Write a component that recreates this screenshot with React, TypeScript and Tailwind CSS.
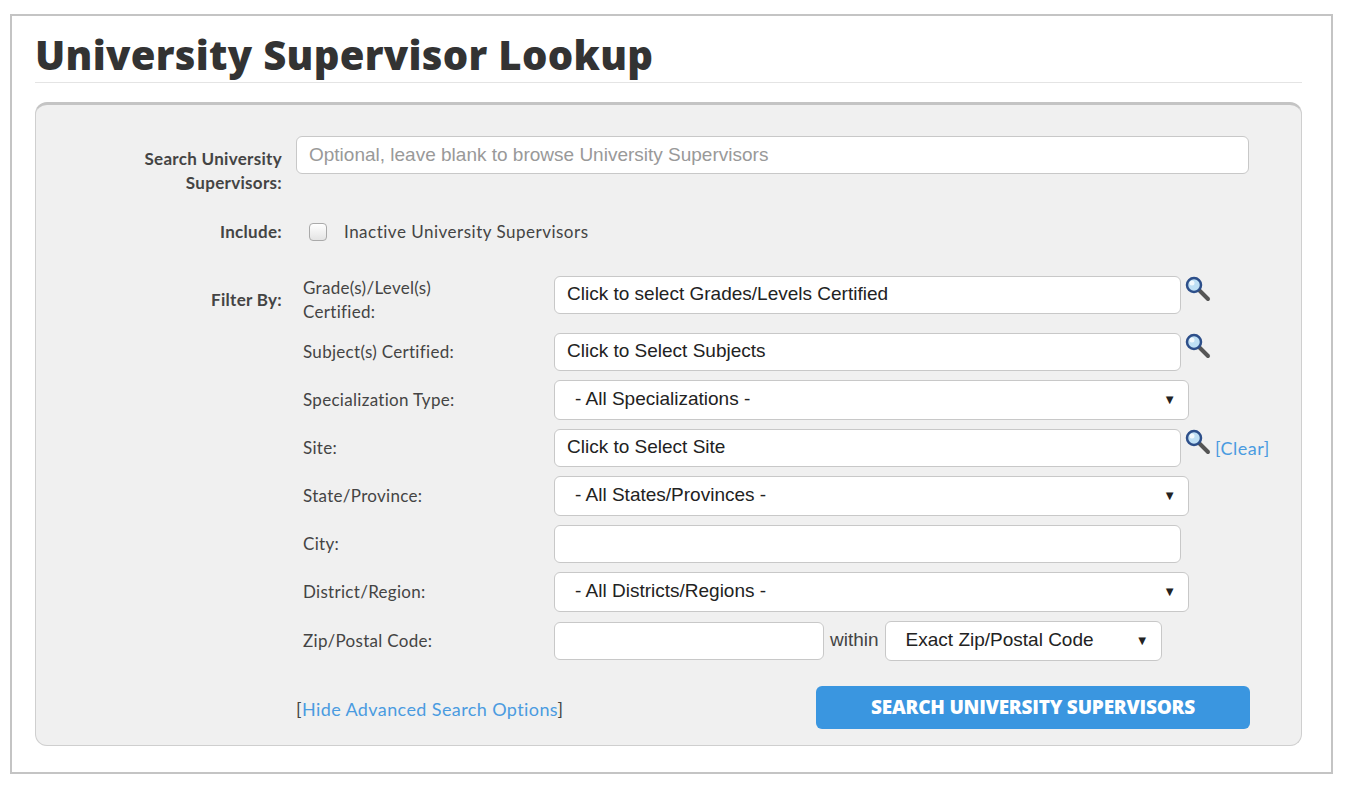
import React from 'react';

const Mag = () => (
  <svg width="26" height="26" viewBox="0 0 26 26" className="shrink-0">
    <line x1="14" y1="14" x2="23" y2="23" stroke="#555" strokeWidth="4" strokeLinecap="round" />
    <circle cx="9" cy="9" r="7" fill="#bfe0f5" stroke="#2d4f8a" strokeWidth="2.5" />
    <circle cx="7" cy="7" r="2.5" fill="#fff" opacity="0.8" />
  </svg>
);

const arial = "font-[family-name:Liberation_Sans,Arial,sans-serif]";
const field = `bg-white border border-[#c8c8c8] rounded-md h-[38px] flex items-center px-3 text-[19px] text-[#222] ${arial}`;

const Select = ({ text, w = 'w-[635px]' }: { text: string; w?: string }) => (
  <div className={`${field} ${w} h-[40px] justify-between pl-5 pr-3`}>
    <span>{text}</span>
    <span className="text-[13px]">▼</span>
  </div>
);

const Row = ({ label, top = false, children }: { label: React.ReactNode; top?: boolean; children: React.ReactNode }) => (
  <div className={`flex ${top ? 'items-start' : 'items-center'}`}>
    <div className="w-[251px] shrink-0 text-[17px] leading-[24px] text-[#444] tracking-[0.3px]">{label}</div>
    {children}
  </div>
);

export default function App() {
  return (
    <div className="min-h-[788px] bg-white pt-[14px] pl-[10px] font-[family-name:Lato,sans-serif]">
      <div className="w-[1323px] h-[760px] border-2 border-[#c4c4c4] pl-[23px] pr-[29px]">
        <h1 className="pt-[14px] pb-[2px] text-[40px] leading-[50px] font-extrabold text-[#333] tracking-[0.3px] font-[family-name:Open_Sans,sans-serif] border-b border-[#e4e4e4]">
          University Supervisor Lookup
        </h1>
        <div className="mt-[19px] h-[644px] bg-[#f0f0f0] border border-[#cfcfcf] border-t-[3px] border-t-[#c4c4c4] rounded-xl">
          <div className="flex pt-[31px]">
            <div className="w-[246px] shrink-0 text-right text-[17px] font-bold text-[#444] leading-[24px] pt-[11px] tracking-[0.3px]">
              Search University<br />Supervisors:
            </div>
            <div className={`ml-[14px] w-[953px] h-[38px] bg-white border border-[#c8c8c8] rounded-md flex items-center px-3 text-[19px] text-[#999] ${arial}`}>
              Optional, leave blank to browse University Supervisors
            </div>
          </div>
          <div className="flex items-center mt-[24px]">
            <div className="w-[246px] shrink-0 text-right text-[17px] font-bold text-[#444] tracking-[0.3px]">Include:</div>
            <div className="ml-[27px] w-[18px] h-[18px] rounded-[4px] border border-[#aaa] bg-gradient-to-b from-white to-[#e4e4e4]" />
            <span className="ml-[17px] text-[17px] text-[#444] tracking-[0.5px]">Inactive University Supervisors</span>
          </div>
          <div className="flex mt-[28px]">
            <div className="w-[246px] shrink-0 text-right text-[17px] font-bold text-[#444] pt-[14px] tracking-[0.3px]">Filter By:</div>
            <div className="ml-[21px] flex flex-col gap-[9px] pt-[3px]">
              <Row label={<>Grade(s)/Level(s)<br />Certified:</>} top>
                <div className="flex items-start gap-1">
                  <div className={`${field} w-[627px]`}>Click to select Grades/Levels Certified</div>
                  <Mag />
                </div>
              </Row>
              <Row label="Subject(s) Certified:">
                <div className="flex items-start gap-1">
                  <div className={`${field} w-[627px]`}>Click to Select Subjects</div>
                  <Mag />
                </div>
              </Row>
              <Row label="Specialization Type:"><Select text="- All Specializations -" /></Row>
              <Row label="Site:">
                <div className="flex items-start gap-1">
                  <div className={`${field} w-[627px]`}>Click to Select Site</div>
                  <Mag />
                  <span className="text-[#4a9be0] text-[18px] mt-[6px] tracking-[0.5px]">[Clear]</span>
                </div>
              </Row>
              <Row label="State/Province:"><Select text="- All States/Provinces -" /></Row>
              <Row label="City:"><div className={`${field} w-[627px]`} /></Row>
              <Row label="District/Region:"><Select text="- All Districts/Regions -" /></Row>
              <Row label="Zip/Postal Code:">
                <div className="flex items-center">
                  <div className={`${field} w-[270px]`} />
                  <span className={`mx-[6px] text-[19px] text-[#444] ${arial}`}>within</span>
                  <div className={`${field} w-[277px] h-[40px] justify-between pl-5 pr-3`}>
                    <span>Exact Zip/Postal Code</span>
                    <span className="text-[13px]">▼</span>
                  </div>
                </div>
              </Row>
            </div>
          </div>
          <div className="flex items-center justify-between mt-[25px] ml-[260px] mr-[51px]">
            <span className="text-[18px] text-[#444] mt-[5px] tracking-[0.4px]">[<span className="text-[#4a9be0]">Hide Advanced Search Options</span>]</span>
            <button className="w-[434px] h-[43px] rounded-md bg-[#3a96e0] text-white font-extrabold text-[19px] tracking-[-0.2px] font-[family-name:Open_Sans,sans-serif]">
              SEARCH UNIVERSITY SUPERVISORS
            </button>
          </div>
        </div>
      </div>
    </div>
  );
}
